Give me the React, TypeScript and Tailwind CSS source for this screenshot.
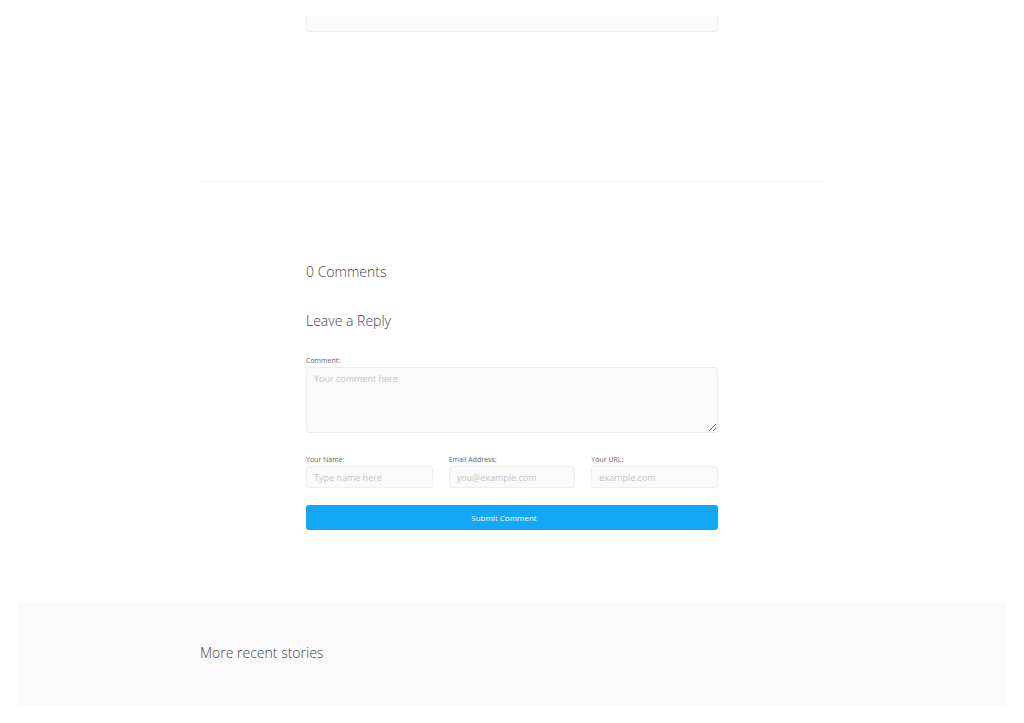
const Label = ({ children }: { children: React.ReactNode }) => (
    <label className="block text-[7px] leading-[10px] text-[#666] mb-[1px]">{children}</label>
)

const Field = ({ label, placeholder }: { label: string, placeholder: string }) => (
    <div className="flex flex-col">
        <Label>{label}</Label>
        <input
            placeholder={placeholder}
            className="h-[22px] w-full rounded-[3px] border border-[#eeeeee] bg-[#fafafa] px-[7px] text-[9px] text-[#555] placeholder:text-[#c4c4c4] outline-none"
        />
    </div>
)

export default function App() {
    return <div className="min-h-[723px] bg-white pt-4 text-[#444]" style={{ fontFamily: '"Open Sans", "Liberation Sans", sans-serif' }}>
        <div className="mx-auto w-[412px] h-[16px] rounded-b-[3px] border border-t-0 border-[#ededed] bg-[#fafafa]" />

        <hr className="mx-auto mt-[149px] w-[624px] border-0 border-t border-[#f0f0f0]" />

        <section className="mx-auto mt-[80px] w-[412px]">
            <h3 className="text-[14px] leading-5 font-light text-[#444]">0 Comments</h3>
            <h3 className="mt-[29px] text-[14px] leading-5 font-light text-[#444]">Leave a Reply</h3>

            <form className="mt-[25px]" onSubmit={e => e.preventDefault()}>
                <Label>Comment:</Label>
                <textarea
                    placeholder="Your comment here"
                    className="block h-[66px] w-full rounded-[3px] border border-[#eeeeee] bg-[#fafafa] px-[7px] py-[4px] text-[9px] leading-[14px] text-[#555] placeholder:text-[#c4c4c4] outline-none"
                />

                <div className="mt-[22px] grid grid-cols-3 gap-4">
                    <Field label="Your Name:" placeholder="Type name here" />
                    <Field label="Email Address:" placeholder="you@example.com" />
                    <Field label="Your URL:" placeholder="example.com" />
                </div>

                <button type="submit" className="mt-[17px] h-[25px] w-full rounded-[3px] bg-[#13a8f5] pr-[16px] text-[8px] text-white">Submit Comment</button>
            </form>
        </section>

        <section className="mx-[17px] mt-[71px] h-[104px] bg-[#fafafa] flex items-center">
            <div className="mx-auto w-[624px]">
                <h2 className="text-[14px] leading-5 font-light text-[#444]">More recent stories</h2>
            </div>
        </section>
    </div>
}
